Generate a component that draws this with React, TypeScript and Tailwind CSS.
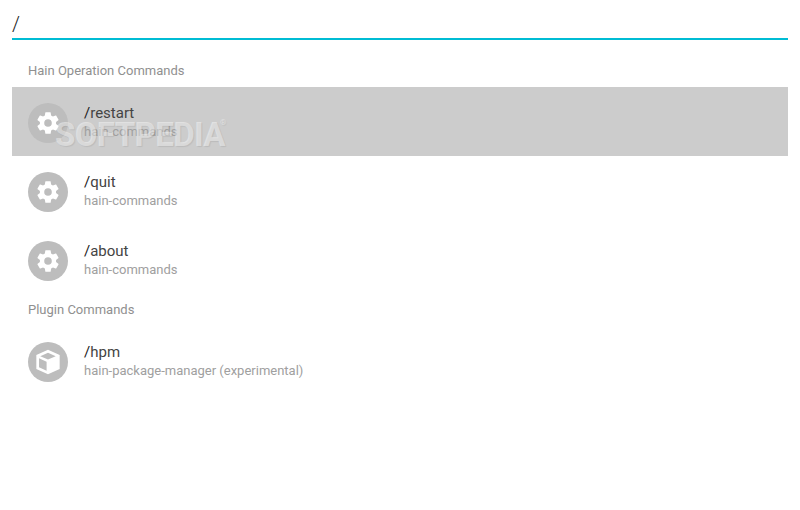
function Gear() {
  return (
    <svg viewBox="0 0 24 24" className="h-[26px] w-[26px]" fill="#fff">
      <path d="M19.4 13c.04-.32.07-.65.07-1s-.03-.68-.07-1l2.1-1.65c.2-.15.25-.42.13-.64l-2-3.46c-.12-.22-.39-.3-.61-.22l-2.49 1c-.52-.4-1.08-.73-1.69-.98l-.38-2.65A.49.49 0 0 0 14 2h-4c-.25 0-.46.18-.49.42l-.38 2.65c-.61.25-1.17.59-1.69.98l-2.49-1c-.23-.09-.49 0-.61.22l-2 3.46c-.13.22-.07.49.12.64L4.57 11c-.04.32-.07.66-.07 1s.03.68.07 1l-2.11 1.65c-.19.15-.24.42-.12.64l2 3.46c.12.22.39.3.61.22l2.49-1c.52.4 1.08.73 1.69.98l.38 2.65c.03.24.24.42.49.42h4c.25 0 .46-.18.49-.42l.38-2.65c.61-.25 1.17-.59 1.69-.98l2.49 1c.23.09.49 0 .61-.22l2-3.46c.12-.22.07-.49-.12-.64L19.4 13zM12 15.5a3.5 3.5 0 1 1 0-7 3.5 3.5 0 0 1 0 7z" />
    </svg>
  );
}

function Cube() {
  return (
    <svg viewBox="0 0 24 24" className="h-[28px] w-[28px]" fill="#fff">
      <path d="M12 1.5 2 6v12l10 4.5L22 18V6L12 1.5zm0 2.6L18.6 7 12 9.9 5.4 7 12 4.1zM4.3 8.8l6.5 2.9v7.8l-6.5-2.9V8.8z" />
      <path d="M13.2 11.7l6.5-2.9v7.8l-6.5 2.9v-7.8z" opacity="0.55" />
    </svg>
  );
}

function Row({ name, sub, icon, selected }: { name: string; sub: string; icon: React.ReactNode; selected?: boolean }) {
  return (
    <div className={`flex h-[69px] items-start gap-4 pl-4 pt-4 ${selected ? 'bg-[#cccccc]' : ''}`}>
      <div className="flex h-10 w-10 items-center justify-center rounded-full bg-[#bdbdbd]">{icon}</div>
      <div>
        <div className="text-[15px] leading-[20px]">
          <span className="text-[#212121]">/</span>
          <span className="text-[#444444]">{name}</span>
        </div>
        <div className="text-[13px] leading-[18px] text-[#a0a0a0]">{sub}</div>
      </div>
    </div>
  );
}

export default function App() {
  return (
    <div className="relative h-[510px] w-[800px] overflow-hidden bg-white px-3 font-['Roboto',sans-serif]">
      <div className="h-[40px] border-b-2 border-[#00bcd4] pt-[10px] text-[20px] leading-[28px] font-light text-[#212121]">/</div>
      <div className="pl-4 pt-[22px] pb-[8px] text-[13px] leading-[17px] text-[#909090]">Hain Operation Commands</div>
      <Row name="restart" sub="hain-commands" icon={<Gear />} selected />
      <Row name="quit" sub="hain-commands" icon={<Gear />} />
      <Row name="about" sub="hain-commands" icon={<Gear />} />
      <div className="pl-4 pt-[7px] pb-[8px] text-[13px] leading-[17px] text-[#909090]">Plugin Commands</div>
      <Row name="hpm" sub="hain-package-manager (experimental)" icon={<Cube />} />
      <div className="absolute left-[55px] top-[115px] text-[33px] leading-[40px] font-bold tracking-[-0.6px] text-white/45 [text-shadow:1px_1px_1px_rgba(0,0,0,0.08)]">
        SOFTPEDIA
        <span className="absolute left-[165px] top-[3px] text-[8px] leading-[10px] font-normal">®</span>
      </div>
    </div>
  );
}
